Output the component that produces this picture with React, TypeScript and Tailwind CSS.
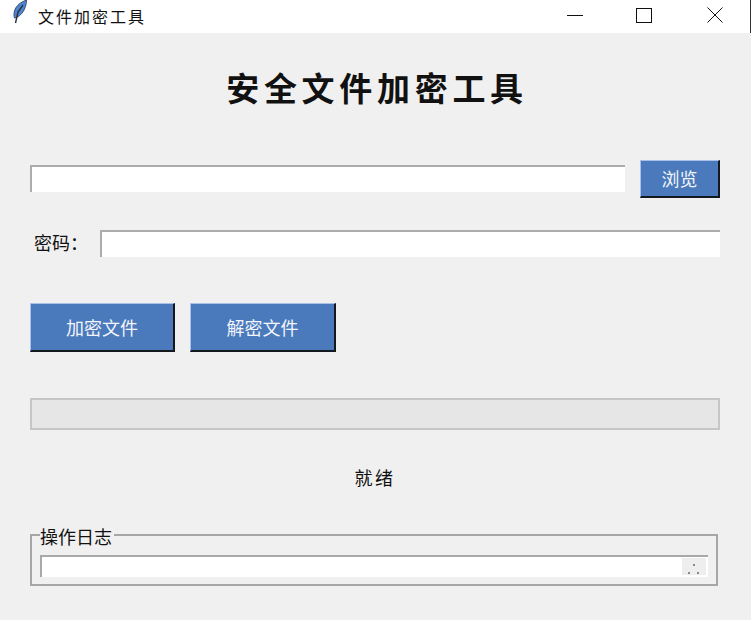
const cjk = "font-['Noto_Sans_CJK_SC','Liberation_Sans',sans-serif]";

function TkButton({ label, className }: { label: string; className: string }) {
  return (
    <button
      className={`flex items-center justify-center bg-[#4a7abc] border-t border-l border-t-[#a9c1ea] border-l-[#a9c1ea] border-b-2 border-r-2 border-b-[#14181f] border-r-[#14181f] text-[#f2f5fa] ${className}`}
    >
      {label}
    </button>
  );
}

function Entry({ className }: { className: string }) {
  return <div className={`bg-white border-t-2 border-l-2 border-t-[#acacac] border-l-[#acacac] ${className}`} />;
}

export default function App() {
  return (
    <div className={`w-[751px] h-[620px] overflow-hidden flex flex-col bg-[#f0f0f0] text-[#111] ${cjk}`}>
      {/* Title bar */}
      <div className="h-[33px] shrink-0 bg-white border-r border-r-[#333333] flex items-center">
        <svg width="16" height="24" viewBox="0 0 16 24" className="ml-[12px] mb-[9px]">
          <path d="M14.500 0C9 2 4 5.500 2.500 11c-.8 3-.5 5 0 7 3-.5 7-3 9.500-8 1.500-3 2.500-6.500 2.500-10z" fill="#4d86d0" stroke="#3a4f6c" strokeWidth="1" />
          <path d="M11 5 6 12 3.500 23" fill="none" stroke="#2a2f38" strokeWidth="1.400" />
        </svg>
        <span className="ml-[10px] text-[16px] leading-none tracking-[2px] mb-[2px]">文件加密工具</span>
        <div className="ml-auto flex items-center">
          <svg width="16" height="16" viewBox="0 0 16 16" className="mr-[53px] mb-[4px]">
            <path d="M0 8.500h16" stroke="#111" strokeWidth="1" />
          </svg>
          <svg width="16" height="16" viewBox="0 0 16 16" className="mr-[55px] mb-[4px]">
            <rect x=".5" y="1.500" width="15" height="14" fill="none" stroke="#111" strokeWidth="1" />
          </svg>
          <svg width="16" height="16" viewBox="0 0 16 16" className="mr-[27px] mb-[4px]">
            <path d="M.5.500l15 15M15.500.500l-15 15" stroke="#111" strokeWidth="1" />
          </svg>
        </div>
      </div>

      {/* Body */}
      <div className="flex-1 flex flex-col pl-[30px] pr-[31px]">
        <h1 className="mt-[31px] h-[46px] pl-[4px] flex items-center justify-center text-[33px] font-bold tracking-[4.700px] leading-none">
          安全文件加密工具
        </h1>

        <div className="mt-[50px] flex items-start gap-[15px]">
          <Entry className="mt-[5px] w-[595px] h-[27px]" />
          <TkButton label="浏览" className="w-[80px] h-[38px] text-[18px]" />
        </div>

        <div className="mt-[32px] flex items-center">
          <span className="w-[70px] pl-[4px] mb-[3px] text-[18px] leading-none">密码：</span>
          <Entry className="flex-1 h-[27px]" />
        </div>

        <div className="mt-[46px] flex gap-[15px]">
          <TkButton label="加密文件" className="w-[145px] h-[49px] text-[18px]" />
          <TkButton label="解密文件" className="w-[146px] h-[49px] text-[18px]" />
        </div>

        <div className="mt-[46px] h-[32px] bg-[#e6e6e6] border-2 border-[#c6c6c6]" />

        <div className="mt-[34px] h-[26px] flex items-center justify-center text-[18px] tracking-[2.500px] leading-none">
          就绪
        </div>

        {/* Log frame */}
        <div className="relative mt-[44px] w-[688px] h-[52px] border-2 border-[#a6a6a6] pt-[19px] pl-[8px] pr-[8px]">
          <span className="absolute left-[8px] top-[-11px] bg-[#f0f0f0] pr-[2px] text-[18px] leading-[22px]">操作日志</span>
          <div className="h-[22px] bg-white border-t-2 border-l-2 border-t-[#a9a9a9] border-l-[#a9a9a9] flex justify-end">
            <div className="relative w-[24px] h-[17px] mt-[1px] mr-[2px] bg-[#eeeeee]">
              <span className="absolute left-[11px] top-[6px] w-[2px] h-[2px] bg-[#8a8a8a]" />
              <span className="absolute left-[6px] top-[14px] w-[2px] h-[2px] bg-[#8a8a8a]" />
              <span className="absolute left-[15px] top-[14px] w-[2px] h-[2px] bg-[#8a8a8a]" />
            </div>
          </div>
        </div>
      </div>
    </div>
  );
}
